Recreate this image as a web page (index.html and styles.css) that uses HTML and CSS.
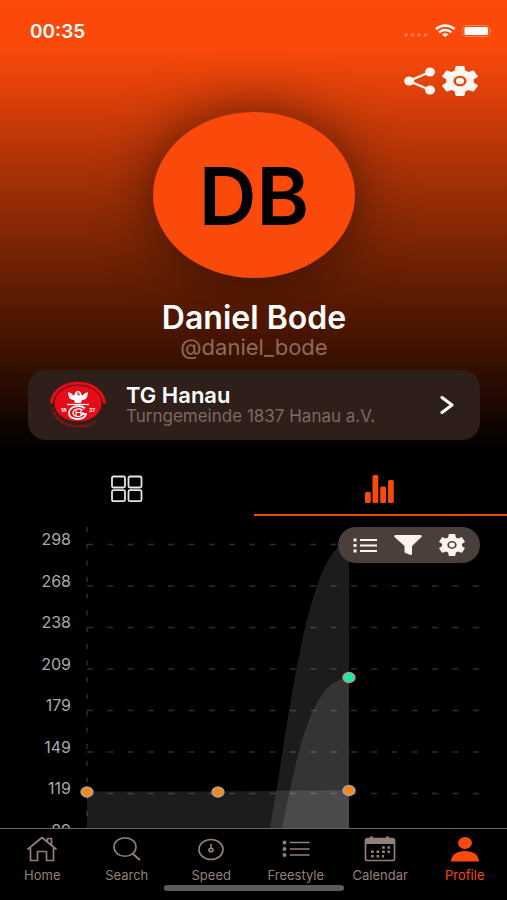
FILE: index.html
```html
<!DOCTYPE html>
<html lang="en">
<head>
<meta charset="utf-8">
<meta name="viewport" content="width=device-width, initial-scale=1">
<title>Daniel Bode</title>
<link rel="stylesheet" href="styles.css">
</head>
<body>
<svg class="defs" aria-hidden="true">
  <symbol id="gear" viewBox="2.6 2.4 18.8 19.2" preserveAspectRatio="none">
    <path fill-rule="evenodd" d="M19.14 12.94c.04-.3.06-.61.06-.94 0-.32-.02-.64-.07-.94l2.03-1.58c.18-.14.23-.41.12-.61l-1.92-3.32c-.12-.22-.37-.29-.59-.22l-2.39.96c-.5-.38-1.03-.7-1.62-.94L14.4 2.81c-.04-.24-.24-.41-.48-.41h-3.84c-.24 0-.43.17-.47.41L9.25 5.35C8.66 5.59 8.12 5.92 7.63 6.29L5.24 5.33c-.22-.08-.47 0-.59.22L2.74 8.87c-.12.21-.08.47.12.61l2.03 1.58C4.84 11.36 4.8 11.69 4.8 12s.02.64.07.94l-2.03 1.58c-.18.14-.23.41-.12.61l1.92 3.32c.12.22.37.29.59.22l2.39-.96c.5.38 1.03.7 1.62.94l.36 2.54c.05.24.24.41.48.41h3.84c.24 0 .44-.17.47-.41l.36-2.54c.59-.24 1.13-.56 1.62-.94l2.39.96c.22.08.47 0 .59-.22l1.92-3.32c.12-.22.07-.47-.12-.61zM12 8.6a3.4 3.4 0 1 0 0 6.8 3.4 3.4 0 1 0 0-6.8z"/>
    <circle cx="12" cy="12" r="2.1"/>
  </symbol>
</svg>
<div class="app">
  <header class="hero">
    <div class="status">
      <time>00:35</time>
      <svg class="status-icons" width="90" height="16" viewBox="0 0 90 16" aria-hidden="true">
        <g fill="#fc7f4d"><circle cx="4" cy="12" r="1.8"/><circle cx="10.500" cy="12" r="1.800"/><circle cx="17" cy="12" r="1.800"/><circle cx="23.500" cy="12" r="1.800"/></g>
        <g fill="none" stroke="#fff" stroke-width="2.400"><path d="M34 6Q43 -1.200 52.800 6"/><path d="M37 9.400Q43 4.500 49.500 9.400"/></g>
        <path d="M40 11.500Q43 9 46.500 11.500L43.200 14Z" fill="#fff"/>
        <rect x="60.500" y="2.500" width="27" height="11" rx="3.500" fill="none" stroke="#fc7f4d"/>
        <rect x="62.500" y="4" width="23.500" height="8" rx="1.500" fill="#fff"/>
        <path d="M88.500 6q2.200 2 0 4z" fill="#fc7f4d"/>
      </svg>
    </div>
    <div class="actions">
      <button type="button" aria-label="Share">
        <svg width="32" height="28" viewBox="0 0 32 28"><path d="M26 5 5 14l21 9" fill="none" stroke="currentColor" stroke-width="2.400"/><ellipse cx="26" cy="5" rx="5" ry="4.500"/><ellipse cx="5.200" cy="14" rx="5" ry="4.500"/><ellipse cx="26" cy="23" rx="5" ry="4.500"/></svg>
      </button>
      <button type="button" aria-label="Settings"><svg width="36" height="30"><use href="#gear"/></svg></button>
    </div>
    <div class="avatar">DB</div>
    <h1>Daniel Bode</h1>
    <p class="handle">@daniel_bode</p>
    <a class="club" href="#club">
      <svg class="crest" width="58" height="48" viewBox="0 0 58 48" aria-hidden="true">
        <path id="crest-arc" d="M1.500 24C3 54.500 55 54.500 56.500 24" fill="none"/>
        <path d="M1 22.500C3 -6.500 55 -6.500 57 22.500H54C51 -2 7 -2 4 22.500Z" fill="#e60c18"/>
        <ellipse cx="29" cy="22.500" rx="24" ry="18.500" fill="#e60c18" stroke="#4a1414"/>
        <text class="crest-ring"><textPath href="#crest-arc" startOffset="2">TURNGEMEINDE HANAU A.V.</textPath></text>
        <path d="M19 11q0 7 5 8h10q5-1 5-8-4 1-6 4-1-5-4-5t-4 5q-2-3-6-4zM25 19h8l-1 3h-6z" fill="#fff"/>
        <path d="M29 11v3l2-1" fill="none" stroke="#e60c18"/>
        <path d="M18 23.500h22" stroke="#fff" stroke-width="1.300"/>
        <path d="M36 27.200Q32 24.200 26 25.500Q20 27.500 20 32Q20 37.500 28 38Q36 38 37 33H32" fill="none" stroke="#fff" stroke-width="1.800"/>
        <path d="M34 29Q30 27 26.500 28.500Q23.500 30 24 32.500Q25 35.500 30 35.500Q34 35 34 31" fill="none" stroke="#fff" stroke-width="1.200"/>
        <path d="M27 28v7M32 28v7M27 31.500h5" stroke="#fff" stroke-width="1.100"/>
        <text class="crest-year" x="12" y="31">18</text><text class="crest-year" x="40" y="31">37</text>
      </svg>
      <span class="club-text"><strong>TG Hanau</strong><span>Turngemeinde 1837 Hanau a.V.</span></span>
      <svg width="14" height="18" viewBox="0 0 14 18" aria-hidden="true"><path d="M2 1.500 12 9 2 16.500" fill="none" stroke="#fff" stroke-width="3" stroke-linecap="round" stroke-linejoin="round"/></svg>
    </a>
  </header>

  <nav class="views" aria-label="Profile views">
    <button type="button" aria-label="Posts"><svg width="32" height="28" viewBox="0 0 32 28"><g fill="none" stroke="#e8e4e2" stroke-width="1.800"><rect x="1" y="1.500" width="13" height="11" rx="1.500"/><rect x="17.500" y="1.500" width="13" height="11" rx="1.500"/><rect x="1" y="15.200" width="13" height="11" rx="1.500"/><rect x="17.500" y="15.200" width="13" height="11" rx="1.500"/></g></svg></button>
    <button type="button" class="active" aria-label="Statistics"><svg width="30" height="28" viewBox="0 0 30 28"><rect x="0" y="17" width="5.800" height="11" rx="1.500"/><rect x="7.500" y="0" width="5.800" height="28" rx="1.500"/><rect x="15.200" y="11.500" width="5.800" height="16.500" rx="1.500"/><rect x="23" y="5" width="5.800" height="23" rx="1.500"/></svg></button>
  </nav>

  <main class="chart">
    <ol class="scale"><li>298</li><li>268</li><li>238</li><li>209</li><li>179</li><li>149</li><li>119</li><li>89</li></ol>
    <svg class="plot" viewBox="0 0 400 312" preserveAspectRatio="none" role="img" aria-label="Difficulty over time">
      <g fill="none" stroke="#2d2d2d" stroke-width="1.500">
        <path stroke-dasharray="6 14.300" d="M8 28.500H401M8 70H401M8 111.500H401M8 153H401M8 194.500H401M8 236H401M8 277.500H401"/>
        <path stroke-dasharray="5 11.700" d="M8 11V312"/>
      </g>
      <g fill="#fff" fill-opacity=".11">
        <path d="M8 275.500H139L270 274V312H8Z"/>
        <path d="M191 312C209 215 228 27 270 27V312Z"/>
        <path d="M203 312C218 240 232 162 270 162V312Z"/>
      </g>
      <g stroke="#aaa19b" stroke-width="1.800">
        <g fill="#ff8517"><ellipse cx="8" cy="276" rx="5.800" ry="4.800"/><ellipse cx="139" cy="276" rx="5.800" ry="4.800"/><ellipse cx="270" cy="274.500" rx="5.800" ry="4.800"/></g>
        <ellipse cx="270" cy="161.500" rx="5.800" ry="4.800" fill="#15efa0"/>
      </g>
    </svg>
    <div class="tools">
      <button type="button" aria-label="List"><svg width="24" height="15" viewBox="0 0 24 15"><path d="M7 2h17M7 7.500h17M7 13h17" stroke="currentColor" stroke-width="2"/><path d="M.5 2h3M.5 7.500h3M.5 13h3" stroke="currentColor" stroke-width="3"/></svg></button>
      <button type="button" aria-label="Filter"><svg width="28" height="20" viewBox="0 0 28 20"><path d="M1.500 0h25q2 .5 1 2l-9.500 9v8q0 1-1.500 1l-5-2q-1-.5-1-1.500V11L.5 2Q-.5.500 1.500 0z"/></svg></button>
      <button type="button" aria-label="Chart settings"><svg width="26" height="22"><use href="#gear"/></svg></button>
    </div>
  </main>

  <nav class="tabbar" aria-label="Main">
    <a href="#home"><svg width="32" height="26" viewBox="0 0 32 26"><path d="M1.500 13.500 16 1.500l14.500 12M4.500 12v12.500h7v-9h9v9h7V12M21.500 5V2.500h4V9" fill="none" stroke="currentColor" stroke-width="1.700" stroke-linejoin="round"/></svg>Home</a>
    <a href="#search"><svg width="28" height="26" viewBox="0 0 28 26"><ellipse cx="12" cy="11" rx="11" ry="9.300" fill="none" stroke="currentColor" stroke-width="1.600"/><path d="m19.500 17.500 7.500 6.500" stroke="currentColor" stroke-width="2"/></svg>Search</a>
    <a href="#speed"><svg width="26" height="26" viewBox="0 0 26 26"><g fill="none" stroke="currentColor" stroke-width="1.700"><ellipse cx="13" cy="13.500" rx="12" ry="10"/><path d="M13 8v4"/><ellipse cx="13" cy="14" rx="2" ry="1.700"/></g></svg>Speed</a>
    <a href="#freestyle"><svg width="28" height="26" viewBox="0 0 28 26"><path d="M8.500 6.500H27M8.500 13H27M8.500 19H27" stroke="currentColor" stroke-width="1.700" stroke-linecap="round"/><circle cx="2.500" cy="6.500" r="2"/><circle cx="2.500" cy="13" r="2"/><circle cx="2.500" cy="19" r="2"/></svg>Freestyle</a>
    <a href="#calendar"><svg width="32" height="26" viewBox="0 0 32 26"><rect x="1.500" y="2.500" width="29" height="22" rx="2" fill="none" stroke="currentColor" stroke-width="1.700"/><path d="M1.500 3h29v5h-29zM6 .500h3v2H6zM22 .500h3v2h-3z"/><path d="M18 11.500h8M7 15.800h19M7 20.200h13" stroke="currentColor" stroke-width="2.600" stroke-dasharray="2.800 2.700"/></svg>Calendar</a>
    <a href="#profile" class="active" aria-current="page"><svg width="28" height="26" viewBox="0 0 28 26"><ellipse cx="14" cy="7" rx="7" ry="6"/><path d="M0 25.500q1-10.500 14-10.500t14 10.500z"/></svg>Profile</a>
    <span class="home-indicator"></span>
  </nav>
</div>
</body>
</html>
```
FILE: styles.css
```css
* { box-sizing: border-box; }

body {
  margin: 0;
  background: #000;
  color: #fff;
  font-family: Inter, "Liberation Sans", sans-serif;
}

button {
  display: flex;
  align-items: center;
  justify-content: center;
  margin: 0;
  padding: 0;
  border: 0;
  background: none;
  color: inherit;
}

a { color: inherit; text-decoration: none; }
svg { display: block; flex: none; fill: currentColor; }
.defs { position: absolute; width: 0; height: 0; }

.app {
  display: flex;
  flex-direction: column;
  height: 100vh;
  overflow: hidden;
}

.hero {
  display: flex;
  flex: none;
  flex-direction: column;
  padding: 20px 27px 20px 28px;
  background: linear-gradient(#fb4a0b 0, #f9490b 50px, #b33407 155px, #651e03 280px, #401200 350px, #000 450px);
}

.status {
  display: flex;
  align-items: center;
  justify-content: space-between;
  height: 22px;
  margin: 0 -12px 0 2px;
  font-size: 19px;
  font-weight: 600;
}

.actions {
  display: flex;
  align-items: center;
  justify-content: flex-end;
  gap: 6px;
  height: 30px;
  margin-top: 24px;
  padding-right: 2px;
  color: #fff6f2;
}

.avatar {
  display: flex;
  align-items: center;
  justify-content: center;
  align-self: center;
  width: 202px;
  height: 166px;
  margin-top: 16px;
  border-radius: 50%;
  background: #f9490b;
  box-shadow: 0 0 56px rgba(0, 0, 0, .55);
  color: #000;
  font-size: 80px;
  font-weight: 600;
}

h1 {
  margin: 22px 0 0;
  font-size: 32px;
  font-weight: 600;
  line-height: 36px;
  text-align: center;
}

.handle {
  margin: 0;
  color: #8c6a5c;
  font-size: 22px;
  line-height: 22px;
  text-align: center;
}

.club {
  display: flex;
  align-items: center;
  height: 70px;
  margin-top: 12px;
  padding: 0 26px 0 21px;
  border-radius: 18px;
  background: #2f1f1a;
}

.club-text {
  display: flex;
  flex: 1;
  flex-direction: column;
  margin-left: 19px;
  color: #7b6962;
  font-size: 17px;
  line-height: 20px;
}

.club-text strong {
  color: #fff;
  font-size: 22px;
  font-weight: 600;
  line-height: 22px;
}

.crest-ring { fill: #a80f18; font-size: 4px; font-weight: 700; }
.crest-year { fill: #fff; font-size: 5px; font-weight: 700; }

.views {
  display: flex;
  flex: none;
  height: 56px;
}

.views button {
  flex: 1;
  padding-top: 4px;
  border-bottom: 2px solid transparent;
}

.views .active {
  border-color: #e9480f;
  color: #f9490b;
}

.chart {
  position: relative;
  display: flex;
  flex: 1;
  align-items: flex-start;
  min-height: 0;
  overflow: hidden;
  padding-right: 28px;
}

.scale {
  display: flex;
  flex-direction: column;
  width: 71px;
  height: 332px;
  margin: 3px 0 0;
  padding: 0;
  color: #aaa;
  font-size: 16px;
  line-height: 40px;
  list-style: none;
  text-align: right;
}

.scale li { flex: 1; }

.plot {
  flex: 1;
  min-width: 0;
  height: 312px;
  margin-left: 8px;
}

.tools {
  position: absolute;
  top: 11px;
  right: 27px;
  display: flex;
  align-items: center;
  justify-content: space-between;
  width: 142px;
  height: 36px;
  padding: 0 15px;
  border-radius: 18px;
  background: #4b3f3c;
  color: #fff3ef;
}

.tabbar {
  position: relative;
  display: grid;
  flex: none;
  grid-template-columns: repeat(6, 1fr);
  height: 72px;
  padding-top: 7px;
  border-top: 1px solid #696361;
  background: #000;
  color: #918078;
}

.tabbar a {
  display: flex;
  flex-direction: column;
  align-items: center;
  gap: 5px;
  font-size: 13px;
  line-height: 16px;
}

.tabbar .active { color: #f9490b; }

.home-indicator {
  position: absolute;
  bottom: 9px;
  left: 50%;
  width: 180px;
  height: 6px;
  margin-left: -90px;
  border-radius: 3px;
  background: #5c5c5c;
}
```
